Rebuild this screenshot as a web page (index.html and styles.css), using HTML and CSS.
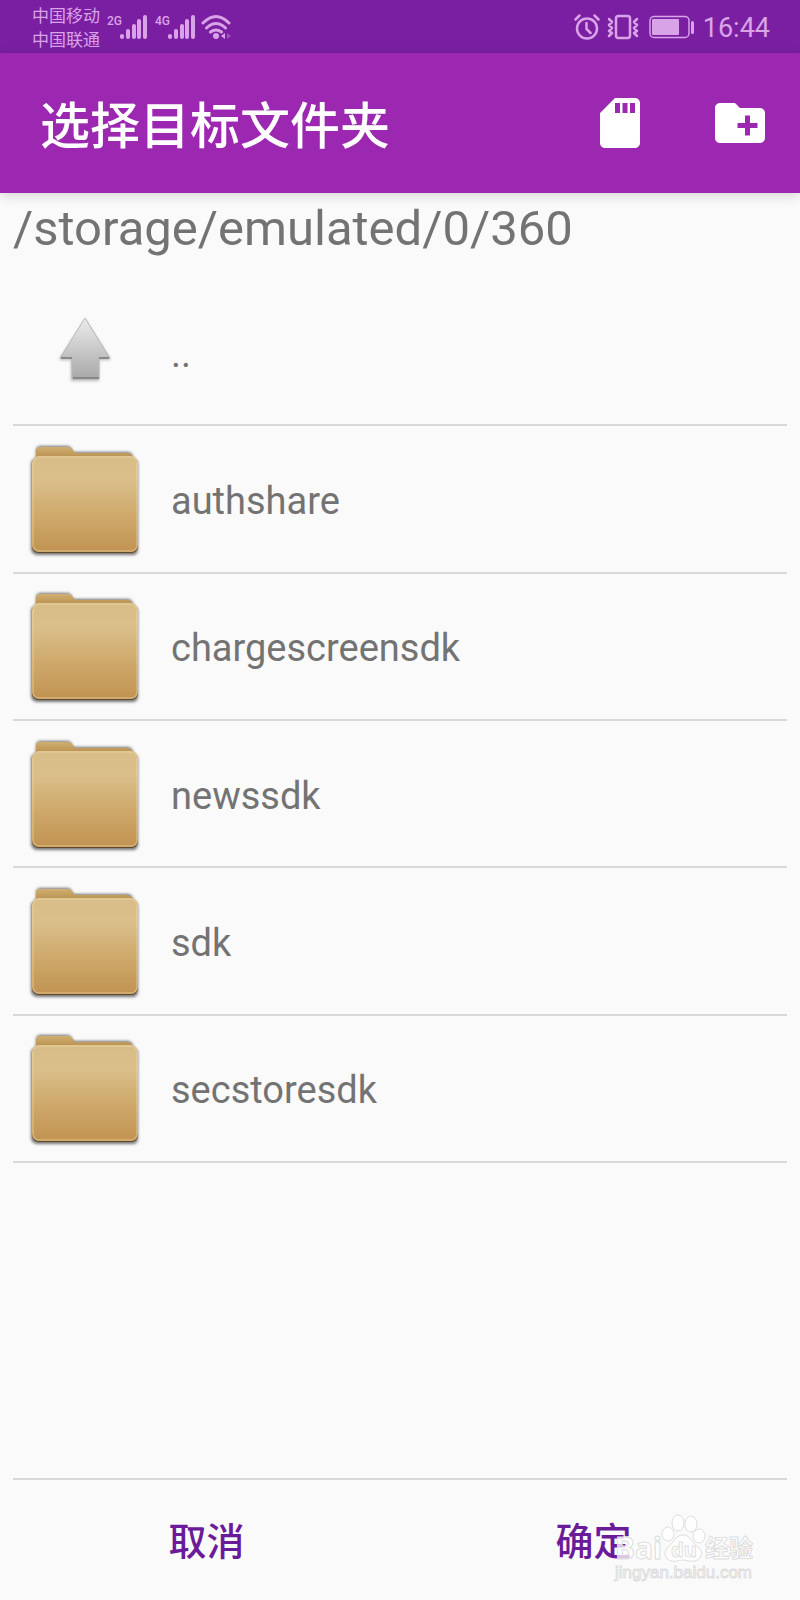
FILE: index.html
```html
<!DOCTYPE html>
<html lang="zh-CN">
<head>
<meta charset="utf-8">
<meta name="viewport" content="width=device-width, initial-scale=1">
<title>选择目标文件夹</title>
<link rel="stylesheet" href="styles.css">
</head>
<body>
<svg class="defs" width="0" height="0" aria-hidden="true">
  <defs>
    <linearGradient id="front" x1="0" y1="0" x2="0" y2="1">
      <stop offset="0" stop-color="#d8bd88"/><stop offset=".25" stop-color="#dabf8b"/><stop offset=".6" stop-color="#cfaa6c"/><stop offset="1" stop-color="#c19352"/>
    </linearGradient>
    <linearGradient id="back" x1="0" y1="0" x2="0" y2="1">
      <stop offset="0" stop-color="#cfae70"/><stop offset="1" stop-color="#b08544"/>
    </linearGradient>
    <linearGradient id="grey" x1="0" y1="0" x2="0" y2="1">
      <stop offset="0" stop-color="#ececec"/><stop offset="1" stop-color="#a8a8a8"/>
    </linearGradient>
    <filter id="soft" x="-10%" y="-10%" width="120%" height="120%"><feGaussianBlur stdDeviation="1.5"/></filter>
    <symbol id="folder" viewBox="0 0 116 116">
      <path d="M9 14V8q0-5 5-5h26q4 0 5 4l1 2h54q5 0 6 5l5 6v86q0 6-6 6H11q-7 0-7-7V19z" fill="#444" opacity=".75" filter="url(#soft)"/>
      <path d="M9 19V8q0-4 4-4h28q3 0 5 3l2 3h51q5 0 7 4l2 5z" fill="url(#back)"/>
      <rect x="5" y="14" width="106" height="96" rx="7" fill="#60492a"/>
      <rect x="5" y="13" width="106" height="96" rx="7" fill="url(#front)"/>
      <rect x="6" y="14" width="104" height="94" rx="6" fill="none" stroke="#f0d7a3" stroke-width="1.5" opacity=".45"/>
    </symbol>
  </defs>
</svg>
<div class="screen">
  <div class="status">
    <div class="carriers"><span>中国移动</span><span>中国联通</span></div>
    <div class="signal"><span class="net">2G</span>
      <svg width="28" height="26" viewBox="0 0 28 26" fill="none" stroke="currentColor" stroke-width="4" stroke-linecap="round"><path d="M2 23v-1M8 23v-6M14 23V12M19 23V7M25 23V3"/></svg></div>
    <div class="signal"><span class="net">4G</span>
      <svg width="28" height="26" viewBox="0 0 28 26" fill="none" stroke="currentColor" stroke-width="4" stroke-linecap="round"><path d="M2 23v-1M8 23v-6M14 23V12M19 23V7M25 23V3"/></svg></div>
    <svg class="wifi" width="30" height="26" viewBox="0 0 30 26" fill="none" stroke="currentColor" stroke-width="3" stroke-linecap="round"><path d="M2 9q13-13 26 0M5.500 14q9.500-9 19 0M9.500 18q5.500-4 11 0"/><circle cx="15" cy="22" r="3" fill="currentColor" stroke="none"/><path d="M24 19v6l-4-3z" fill="currentColor" stroke="none"/><path d="M26 19v6l4-3z" fill="currentColor" stroke="none" opacity=".4"/></svg>
    <svg class="alarm" width="26" height="26" viewBox="0 0 26 26" fill="none" stroke="currentColor" stroke-width="2.500" stroke-linecap="round"><circle cx="13" cy="14.500" r="10"/><path d="M12.500 9v6l4 4M1.500 5.500l4-4M24.500 5.500l-4-4"/></svg>
    <svg class="vibrate" width="32" height="26" viewBox="0 0 32 26" fill="none" stroke="currentColor" stroke-width="2.500" stroke-linecap="round" stroke-linejoin="round"><rect x="9" y="2" width="14" height="22" rx="2.500"/><path d="M2 5l3 3-3 3 3 3-3 3 3 2-3 3M30 5l-3 3 3 3-3 3 3 3-3 2 3 3"/></svg>
    <svg class="battery" width="46" height="24" viewBox="0 0 46 24"><rect x="1" y="1.500" width="39" height="21" rx="4" fill="none" stroke="currentColor" stroke-width="1.500"/><rect x="3" y="4" width="27" height="16" rx="1" fill="currentColor"/><path d="M43.500 7.500v10" stroke="currentColor" stroke-width="3" stroke-linecap="round"/></svg>
    <time class="clock">16:44</time>
  </div>
  <header class="appbar">
    <h1 class="title">选择目标文件夹</h1>
    <button class="tool" type="button" aria-label="存储卡"><svg width="60" height="60" viewBox="0 0 24 24"><path fill="#fff" fill-rule="evenodd" d="M18 2h-8L4.020 8 4 20c0 1.100.9 2 2 2h12c1.100 0 2-.9 2-2V4c0-1.100-.9-2-2-2zm-6 6h-2V4h2v4zm3 0h-2V4h2v4zm3 0h-2V4h2v4z"/></svg></button>
    <button class="tool" type="button" aria-label="新建文件夹"><svg width="60" height="60" viewBox="0 0 24 24"><path fill="#fff" fill-rule="evenodd" d="M20 6h-8l-2-2H4c-1.110 0-1.990.89-1.990 2L2 18c0 1.110.89 2 2 2h16c1.110 0 2-.89 2-2V8c0-1.110-.89-2-2-2zm-1 8h-3v3h-2v-3h-3v-2h3V9h2v3h3v2z"/></svg></button>
  </header>
  <main class="content">
    <p class="path">/storage/emulated/0/360</p>
    <ul class="list">
      <li class="row"><svg class="icon" viewBox="0 0 116 116"><path d="M58 24l26 40H72v21H44V64H32z" fill="#777" opacity=".5" filter="url(#soft)"/><path d="M58 22l25 40H72v21H45V62H33z" fill="url(#grey)" stroke="#b8b8b8"/><path d="M34 62h11M72 62h10M46 82h26" stroke="#888" stroke-width="2"/></svg><span>..</span></li>
      <li class="row"><svg class="icon"><use href="#folder"/></svg><span>authshare</span></li>
      <li class="row"><svg class="icon"><use href="#folder"/></svg><span>chargescreensdk</span></li>
      <li class="row"><svg class="icon"><use href="#folder"/></svg><span>newssdk</span></li>
      <li class="row"><svg class="icon"><use href="#folder"/></svg><span>sdk</span></li>
      <li class="row"><svg class="icon"><use href="#folder"/></svg><span>secstoresdk</span></li>
    </ul>
  </main>
  <footer class="actions">
    <button class="action" type="button">取消</button>
    <button class="action" type="button">确定</button>
    <svg class="watermark" width="146" height="72" viewBox="0 0 146 72" role="img" aria-label="Baidu 经验">
      <g fill="#fff" fill-opacity=".75" stroke="#dedede">
        <ellipse cx="54" cy="22" rx="6" ry="7"/><ellipse cx="64" cy="11" rx="6" ry="8"/><ellipse cx="77" cy="12" rx="6" ry="8"/><ellipse cx="85" cy="24" rx="6" ry="7"/>
        <path d="M69 23c8 0 9 8 15 12 6 5 4 13-4 14-5 1-7-1-11-1s-6 2-11 1c-8-1-9-9-4-14 6-4 7-12 15-12z"/>
        <g class="mark"><text x="1" y="47" font-size="30">Bai</text><text x="57" y="45" font-size="20">du</text><text x="91" y="45" font-size="24">经验</text></g>
        <text class="site" x="1" y="66" font-size="17">jingyan.baidu.com</text>
      </g>
    </svg>
  </footer>
</div>
</body>
</html>
```
FILE: styles.css
```css
* { box-sizing: border-box; }
body {
  margin: 0;
  background: #fafafa;
  color: #737373;
  font-family: Roboto, "Noto Sans CJK SC", sans-serif;
}
button {
  border: 0;
  padding: 0;
  background: none;
  font: inherit;
  cursor: pointer;
}
.defs { position: absolute; }
.screen {
  display: flex;
  flex-direction: column;
  min-height: 100vh;
}
.status {
  display: flex;
  align-items: center;
  height: 53px;
  padding: 0 30px 0 32px;
  background: #7b1fa2;
  color: #d9a3e8;
}
.carriers {
  display: flex;
  flex-direction: column;
  font-size: 17px;
  line-height: 24px;
  padding-top: 2px;
}
.signal {
  display: flex;
  align-items: flex-start;
  gap: 1px;
  margin-left: 7px;
}
.net {
  font-size: 12px;
  line-height: 14px;
  font-weight: 500;
  width: 12px;
}
.wifi { margin-left: 5px; }
.alarm { margin-left: auto; }
.vibrate { margin-left: 7px; }
.battery { margin-left: 10px; }
.clock {
  margin-left: 8px;
  padding-top: 2px;
  font-size: 27px;
  line-height: 32px;
}
.appbar {
  display: flex;
  align-items: center;
  height: 140px;
  padding: 0 30px 0 40px;
  background: #9c27b0;
  color: #fff;
  box-shadow: 0 2px 12px rgba(0, 0, 0, 0.16);
}
.title {
  flex: 1;
  margin: 0;
  padding-top: 8px;
  font-size: 50px;
  line-height: 72px;
  font-weight: 500;
}
.tool { height: 60px; }
.tool + .tool { margin-left: 60px; }
.tool svg { display: block; }
.content {
  flex: 1;
  padding: 0 13px;
}
.path {
  margin: 0;
  padding-top: 4px;
  font-size: 49px;
  line-height: 64px;
}
.list {
  display: grid;
  grid-template-rows: repeat(6, 1fr);
  min-height: 884px;
  margin: 18px 0 0;
  padding: 0;
  list-style: none;
}
.row {
  display: flex;
  align-items: center;
  gap: 28px;
  padding: 4px 14px 0;
  border-bottom: 2px solid #d9d9d9;
  font-size: 38px;
  line-height: 48px;
}
.icon {
  width: 116px;
  height: 116px;
}
.actions {
  position: relative;
  display: flex;
  height: 122px;
  margin: 0 13px;
  border-top: 2px solid #d9d9d9;
}
.action {
  flex: 1;
  padding-bottom: 4px;
  color: #6a1b9a;
  font-size: 38px;
  font-weight: 500;
}
.watermark {
  position: absolute;
  right: 27px;
  bottom: 16px;
}
.mark {
  font-family: "Noto Sans", "Noto Sans CJK SC", sans-serif;
  font-weight: 700;
}
.site { font-family: "Liberation Sans", sans-serif; }
```
